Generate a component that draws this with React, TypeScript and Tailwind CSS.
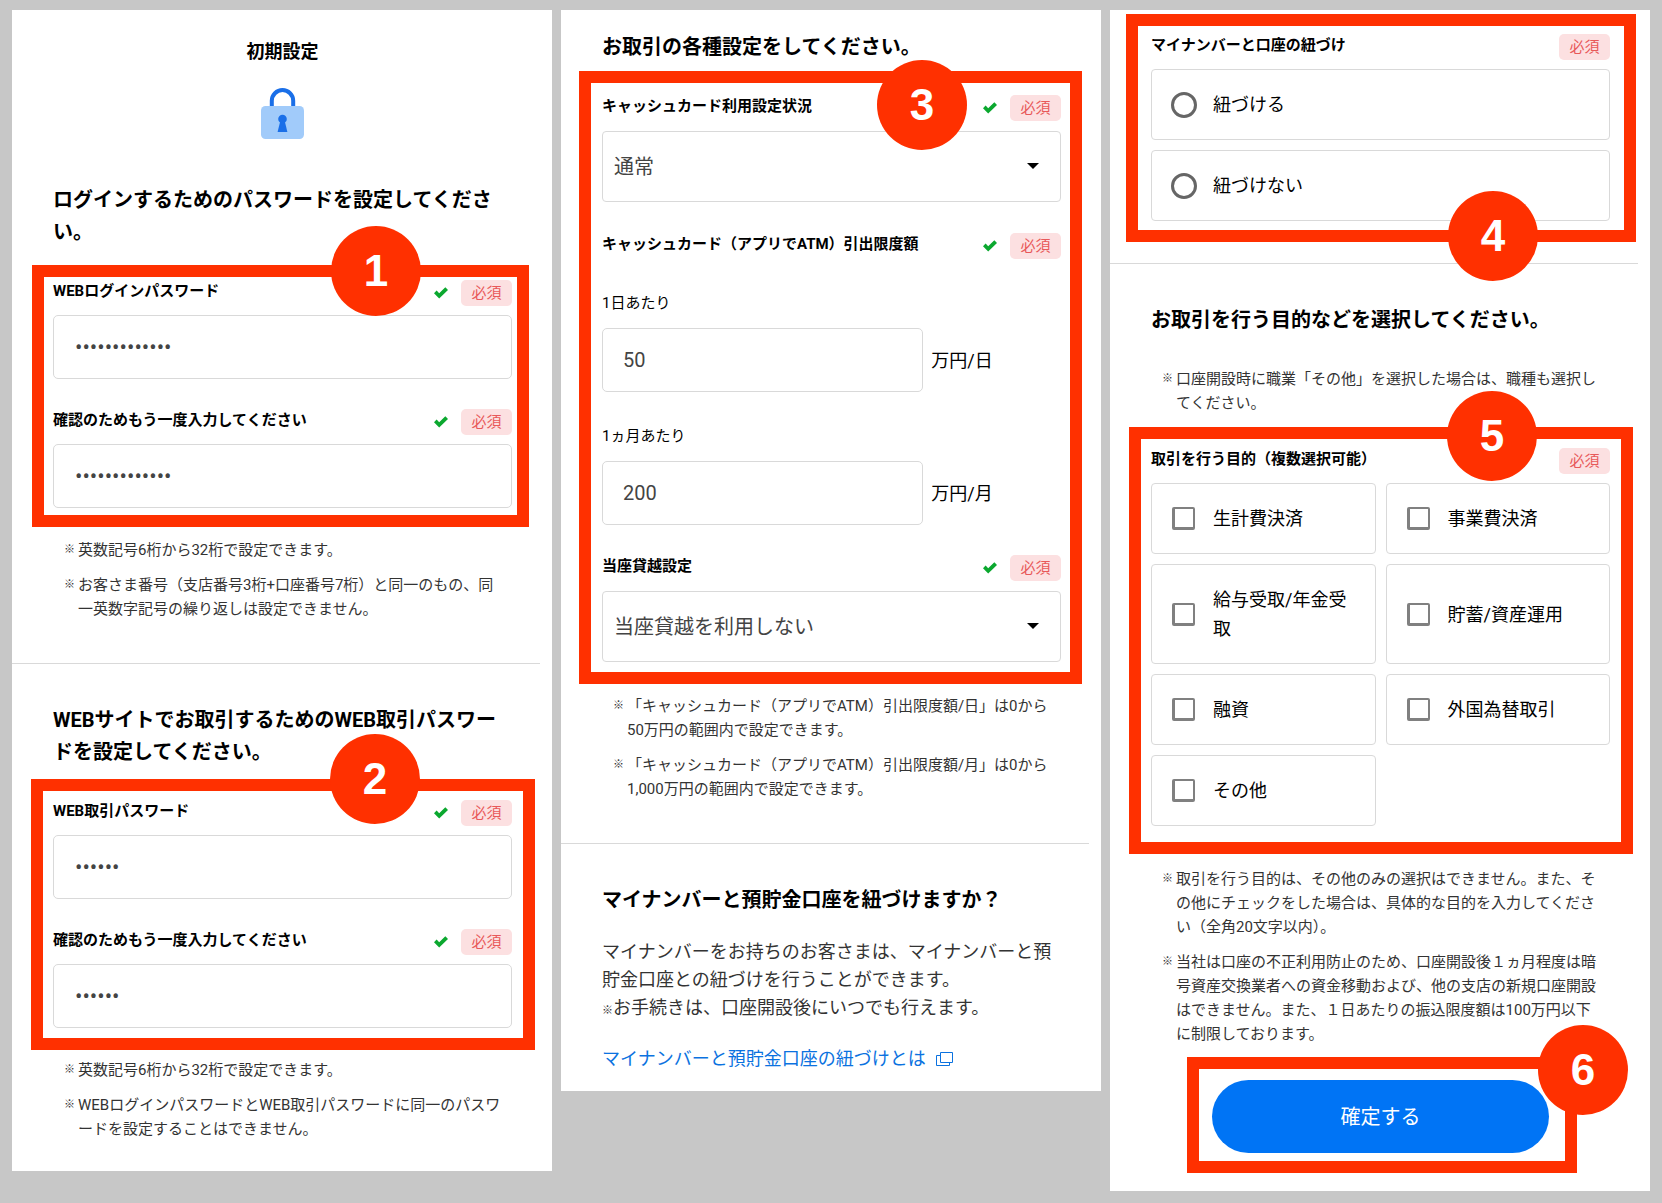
import { useId } from "react";
import type { ReactNode } from "react";

function Panel({ className, children }: { className: string; children: ReactNode }) {
  return <section className={`min-w-0 flex-1 bg-white pr-10 pl-[41px] ${className}`}>{children}</section>;
}

function Heading({ children }: { children: ReactNode }) {
  return <h2 className="text-[20px] leading-8 font-bold text-black">{children}</h2>;
}

function Divider({ className }: { className: string }) {
  return <hr className={`mb-10 -ml-[41px] -mr-7 border-[#d9d9d9] ${className}`} />;
}

/* Red marker frame with its step number */
function Marker({ step, at, className, children }: { step: number; at: string; className: string; children: ReactNode }) {
  return (
    <div className={`relative border-12 border-[#ff3000] ${className}`}>
      {children}
      <span
        className={`absolute flex size-[90px] items-center justify-center rounded-full bg-[#ff3000] font-['Liberation_Sans',sans-serif] text-[44px] leading-none font-bold text-white ${at}`}
      >
        {step}
      </span>
    </div>
  );
}

function Check() {
  return (
    <svg width="14" height="12" viewBox="0 0 14 12" aria-hidden="true">
      <path d="M0 6.200 2.600 3.600 5.200 6.200 11.300.2 14 2.900 5.200 11.600z" fill="#0ba82f" />
    </svg>
  );
}

function LabelRow({ label, htmlFor, checked = true }: { label: string; htmlFor?: string; checked?: boolean }) {
  return (
    <div className="flex h-[26px] items-start justify-between">
      {htmlFor ? (
        <label htmlFor={htmlFor} className="text-[15px] leading-[22px] font-bold">{label}</label>
      ) : (
        <span className="text-[15px] leading-[22px] font-bold">{label}</span>
      )}
      <div className="flex items-center gap-[13px]">
        {checked && <Check />}
        <span className="w-[51px] rounded-[5px] bg-[#fce0e1] text-center text-[15px] leading-[26px] text-[#e8595a]">必須</span>
      </div>
    </div>
  );
}

function PasswordField({ label, value }: { label: string; value: string }) {
  const id = useId();
  return (
    <div>
      <LabelRow label={label} htmlFor={id} />
      <input
        id={id}
        type="password"
        defaultValue={value}
        className="mt-[9px] block h-16 w-full rounded-[5px] border border-[#d9d9d9] px-[21px] text-[22px] text-[#444]"
      />
    </div>
  );
}

function SelectField({ label, options }: { label: string; options: string[] }) {
  const id = useId();
  return (
    <div>
      <LabelRow label={label} htmlFor={id} />
      <div className="relative mt-[10px]">
        <select
          id={id}
          className="block h-[71px] w-full appearance-none rounded-[4px] border border-[#d9d9d9] bg-white px-[11px] text-[20px] text-[#444]"
        >
          {options.map((o) => (
            <option key={o}>{o}</option>
          ))}
        </select>
        <svg
          className="pointer-events-none absolute top-8 right-[22px]"
          width="12"
          height="6"
          viewBox="0 0 12 6"
          aria-hidden="true"
        >
          <path d="M0 0h12L6 6z" fill="#000" />
        </svg>
      </div>
    </div>
  );
}

function LimitField({ label, value, unit }: { label: string; value: string; unit: string }) {
  const id = useId();
  return (
    <div>
      <label htmlFor={id} className="block text-[15px] leading-[22px]">{label}</label>
      <div className="mt-[14px] flex items-center gap-2">
        <input
          id={id}
          type="text"
          inputMode="numeric"
          defaultValue={value}
          className="h-16 w-[70%] rounded-[5px] border border-[#d9d9d9] px-5 text-[20px] text-[#444]"
        />
        <span className="text-[18px]">{unit}</span>
      </div>
    </div>
  );
}

function Choice({ type, name, label }: { type: "radio" | "checkbox"; name: string; label: string }) {
  return (
    <label className="flex items-center rounded-[4px] border border-[#d9d9d9] py-5 pr-5 pl-[19px] text-[18px] leading-[29px]">
      <input
        type={type}
        name={name}
        className={
          type === "radio"
            ? "mr-4 size-[26px] shrink-0 appearance-none rounded-full border-3 border-[#666]"
            : "mr-[18px] ml-px size-[23px] shrink-0 appearance-none rounded-[2px] border-2 border-b-3 border-l-3 border-[#808080]"
        }
      />
      {label}
    </label>
  );
}

function Notes({ items, className }: { items: string[]; className: string }) {
  return (
    <ul className={`flex flex-col gap-[11px] pr-2 pl-[11px] text-[15px] leading-6 text-[#333] ${className}`}>
      {items.map((item) => (
        <li key={item} className="flex">
          <span className="w-[14px] shrink-0 text-[11px] font-bold">※</span>
          <span>{item}</span>
        </li>
      ))}
    </ul>
  );
}

function LockIcon() {
  return (
    <svg className="mx-auto mt-[22px]" width="43" height="51" viewBox="0 0 43 51" aria-hidden="true">
      <path d="M10.8 19v-6.200a10.700 10.700 0 0 1 21.400 0V19" fill="none" stroke="#1a6fe8" strokeWidth="4" />
      <rect y="18" width="43" height="33" rx="4.500" fill="#a1cbfa" />
      <circle cx="21.500" cy="31" r="4.300" fill="#1a6fe8" />
      <path d="M19.300 33h4.400l2.700 11h-9.800z" fill="#1a6fe8" />
    </svg>
  );
}

function WindowIcon() {
  return (
    <svg width="17" height="14" viewBox="0 0 17 14" fill="none" stroke="#0b72e0" aria-hidden="true">
      <path d="M4.500.5h12v10h-12z" />
      <path d="M4 3.500H.5v10h13V11" />
    </svg>
  );
}

const purposes = [
  "生計費決済",
  "事業費決済",
  "給与受取/年金受取",
  "貯蓄/資産運用",
  "融資",
  "外国為替取引",
  "その他",
];

export default function App() {
  return (
    <main
      lang="ja"
      className="flex min-h-screen items-start gap-[9px] bg-[#c7c7c7] px-3 pt-[10px] pb-3 font-[Roboto,'Noto_Sans_CJK_JP',sans-serif] text-black"
    >
      {/* Passwords */}
      <Panel className="pt-7 pb-[30px]">
        <h1 className="text-center text-[18px] leading-7 font-bold">初期設定</h1>
        <LockIcon />
        <div className="mt-[45px]">
          <Heading>ログインするためのパスワードを設定してください。</Heading>
        </div>
        <Marker step={1} at="-top-[51px] right-24" className="mt-[17px] -mr-[17px] -ml-[21px] pt-[3px] pr-[5px] pb-[7px] pl-[9px]">
          <div className="flex flex-col gap-[30px]">
            <PasswordField label="WEBログインパスワード" value="abcdef1234567" />
            <PasswordField label="確認のためもう一度入力してください" value="abcdef1234567" />
          </div>
        </Marker>
        <Notes
          className="mt-[11px]"
          items={[
            "英数記号6桁から32桁で設定できます。",
            "お客さま番号（支店番号3桁+口座番号7桁）と同一のもの、同一英数字記号の繰り返しは設定できません。",
          ]}
        />
        <Divider className="mt-[42px]" />
        <Heading>WEBサイトでお取引するためのWEB取引パスワードを設定してください。</Heading>
        <Marker step={2} at="-top-[57px] right-[103px]" className="mt-[11px] -mr-[23px] -ml-[22px] pt-[9px] pr-[11px] pb-[10px] pl-[10px]">
          <div className="flex flex-col gap-[30px]">
            <PasswordField label="WEB取引パスワード" value="abc123" />
            <PasswordField label="確認のためもう一度入力してください" value="abc123" />
          </div>
        </Marker>
        <Notes
          className="mt-2"
          items={[
            "英数記号6桁から32桁で設定できます。",
            "WEBログインパスワードとWEB取引パスワードに同一のパスワードを設定することはできません。",
          ]}
        />
      </Panel>

      {/* Transaction settings */}
      <Panel className="pt-[21px] pb-[18px]">
        <Heading>お取引の各種設定をしてください。</Heading>
        <Marker step={3} at="-top-[23px] right-[103px]" className="mt-2 -mr-[21px] -ml-[23px] pt-3 pr-[9px] pb-[10px] pl-[11px]">
          <SelectField label="キャッシュカード利用設定状況" options={["通常", "利用停止"]} />
          <div className="mt-[31px] mb-[30px] flex flex-col gap-[33px]">
            <LabelRow label="キャッシュカード（アプリでATM）引出限度額" />
            <LimitField label="1日あたり" value="50" unit="万円/日" />
            <LimitField label="1ヵ月あたり" value="200" unit="万円/月" />
          </div>
          <SelectField label="当座貸越設定" options={["当座貸越を利用しない", "当座貸越を利用する"]} />
        </Marker>
        <Notes
          className="mt-[10px]"
          items={[
            "「キャッシュカード（アプリでATM）引出限度額/日」は0から50万円の範囲内で設定できます。",
            "「キャッシュカード（アプリでATM）引出限度額/月」は0から1,000万円の範囲内で設定できます。",
          ]}
        />
        <Divider className="mt-[42px]" />
        <Heading>マイナンバーと預貯金口座を紐づけますか？</Heading>
        <p className="mt-[22px] text-[18px] leading-7 text-[#333]">
          マイナンバーをお持ちのお客さまは、マイナンバーと預貯金口座との紐づけを行うことができます。
          <br />
          <span className="text-[11px] font-bold">※</span>お手続きは、口座開設後にいつでも行えます。
        </p>
        <a href="#mynumber" className="mt-5 flex items-center gap-[10px] text-[18px] leading-7 text-[#0b72e0]">
          マイナンバーと預貯金口座の紐づけとは
          <WindowIcon />
        </a>
      </Panel>

      {/* My Number link and purposes */}
      <Panel className="pt-1 pb-[18px]">
        <Marker step={4} at="right-[86px] -bottom-[51px]" className="-mr-[26px] -ml-[25px] pt-2 pr-[14px] pb-[9px] pl-[13px]">
          <LabelRow label="マイナンバーと口座の紐づけ" checked={false} />
          <div className="mt-[9px] flex flex-col gap-[10px]">
            <Choice type="radio" name="link" label="紐づける" />
            <Choice type="radio" name="link" label="紐づけない" />
          </div>
        </Marker>
        <Divider className="mt-[21px]" />
        <Heading>お取引を行う目的などを選択してください。</Heading>
        <Notes
          className="mt-[31px]"
          items={["口座開設時に職業「その他」を選択した場合は、職種も選択してください。"]}
        />
        <Marker step={5} at="-top-12 right-[84px]" className="mt-3 -mr-[23px] -ml-[22px] pt-[9px] pr-[11px] pb-4 pl-[10px]">
          <LabelRow label="取引を行う目的（複数選択可能）" checked={false} />
          <div className="mt-[9px] grid grid-cols-2 gap-[10px]">
            {purposes.map((p) => (
              <Choice key={p} type="checkbox" name="purpose" label={p} />
            ))}
          </div>
        </Marker>
        <Notes
          className="mt-[13px]"
          items={[
            "取引を行う目的は、その他のみの選択はできません。また、その他にチェックをした場合は、具体的な目的を入力してください（全角20文字以内）。",
            "当社は口座の不正利用防止のため、口座開設後１ヵ月程度は暗号資産交換業者への資金移動および、他の支店の新規口座開設はできません。また、１日あたりの振込限度額は100万円以下に制限しております。",
          ]}
        />
        <Marker step={6} at="-top-11 -right-[63px]" className="mt-[11px] mr-[33px] ml-9 pt-[11px] pr-4 pb-2 pl-[13px]">
          <button type="button" className="block h-[73px] w-full rounded-full bg-[#0074f5] text-[20px] text-white">
            確定する
          </button>
        </Marker>
      </Panel>
    </main>
  );
}
